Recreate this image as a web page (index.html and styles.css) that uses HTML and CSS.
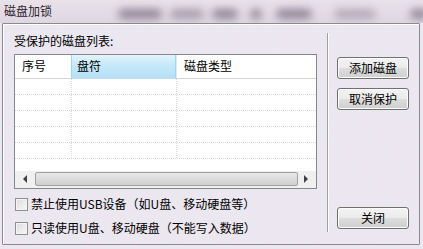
FILE: index.html
```html
<!DOCTYPE html>
<html>
<head>
<meta charset="utf-8">
<link rel="stylesheet" href="styles.css">
</head>
<body>
<div class="window">
  <div class="titlebar">
    <span class="title">磁盘加锁</span>
    <div class="blurs">
      <span class="blob b1"></span><span class="blob b2"></span><span class="blob b3"></span><span class="blob b4"></span><span class="blob b5"></span><span class="blob b6"></span><span class="blob b7"></span>
    </div>
  </div>
  <div class="panel">
    <div class="left">
      <div class="label">受保护的磁盘列表:</div>
      <div class="list">
        <div class="header">
          <div class="col c1">序号</div>
          <div class="col c2 active">盘符</div>
          <div class="col c3">磁盘类型</div>
        </div>
        <div class="rows">
          <div class="row"><span class="cell c1"></span><span class="cell c2"></span><span class="cell c3"></span></div>
          <div class="row"><span class="cell c1"></span><span class="cell c2"></span><span class="cell c3"></span></div>
          <div class="row"><span class="cell c1"></span><span class="cell c2"></span><span class="cell c3"></span></div>
          <div class="row"><span class="cell c1"></span><span class="cell c2"></span><span class="cell c3"></span></div>
          <div class="row"><span class="cell c1"></span><span class="cell c2"></span><span class="cell c3"></span></div>
        </div>
        <div class="hscroll">
          <span class="arrow left-arrow"></span>
          <span class="thumb"></span>
          <span class="arrow right-arrow"></span>
        </div>
      </div>
      <label class="check first"><span class="box"></span>禁止使用USB设备（如U盘、移动硬盘等）</label>
      <label class="check"><span class="box"></span>只读使用U盘、移动硬盘（不能写入数据）</label>
    </div>
    <div class="sep"></div>
    <div class="right">
      <button class="btn">添加磁盘</button>
      <button class="btn second">取消保护</button>
      <button class="btn close">关闭</button>
    </div>
  </div>
</div>
</body>
</html>
```
FILE: styles.css
```css
* { box-sizing: border-box; }
html, body { margin: 0; padding: 0; }
body {
  width: 423px;
  height: 249px;
  overflow: hidden;
  background: #ede9ef;
  font-family: "Noto Sans CJK SC", "Noto Sans", sans-serif;
  font-size: 12px;
  color: #000;
}
.window {
  width: 423px;
  height: 249px;
  background:
    repeating-linear-gradient(45deg, rgba(255,200,240,0.12) 0 1px, rgba(200,230,255,0.12) 1px 2px),
    #ede9ef;
}
.titlebar {
  height: 23px;
  position: relative;
  overflow: hidden;
  background: linear-gradient(#e9e2ea, #ded6e2);
}
.title {
  position: absolute;
  left: 4px;
  top: 3px;
  font-size: 12px;
  line-height: 16px;
  color: #2a2230;
  z-index: 2;
}
.blurs { position: absolute; inset: 0; }
.blob {
  position: absolute;
  top: 9px;
  height: 10px;
  border-radius: 5px;
  background: #6e6276;
  filter: blur(4px);
  opacity: 0.7;
}
.b1 { left: 118px; width: 44px; }
.b2 { left: 170px; width: 34px; opacity: 0.5; }
.b3 { left: 212px; width: 26px; }
.b4 { left: 250px; width: 12px; }
.b5 { left: 276px; width: 36px; }
.b6 { left: 334px; width: 42px; opacity: 0.4; }
.b7 { left: 410px; width: 18px; }

.panel {
  margin: 0 3px 0 2px;
  height: 222px;
  border: 1px solid #8c8892;
  border-radius: 1px;
  display: flex;
  box-shadow: inset 1px 1px 0 #fff;
}
.left {
  width: 324px;
  padding: 10px 0 0 11px;
  display: flex;
  flex-direction: column;
}
.label {
  line-height: 14px;
  height: 14px;
  font-size: 12px;
  margin-bottom: 6px;
}
.list {
  width: 303px;
  height: 135px;
  border: 1px solid #828790;
  background: #fff;
  display: flex;
  flex-direction: column;
}
.header {
  height: 24px;
  display: flex;
  border-bottom: 1px solid #d5d5d5;
  flex: none;
}
.col {
  line-height: 22px;
  padding-left: 7px;
  font-size: 12px;
}
.c1 { width: 56px; }
.c2 { width: 105px; }
.c3 { flex: 1; }
.col.c2, .col.c3 { border-left: 1px solid #e3e8ee; }
.col.active {
  background: linear-gradient(#e3f4fc 0%, #c4e8f8 45%, #b6e0f6 100%);
  border-left: 1px solid #96d9f9;
  border-right: 1px solid #96d9f9;
  padding-left: 5px;
}
.rows { flex: 1; overflow: hidden; }
.row {
  height: 16px;
  display: flex;
  border-bottom: 1px dotted #d8d8d8;
}
.cell { height: 100%; }
.cell.c2, .cell.c3 { border-left: 1px dotted #d8d8d8; }
.hscroll {
  height: 17px;
  flex: none;
  display: flex;
  align-items: center;
  background: #f0f0f0;
  padding: 0 4px 2px 4px;
}
.arrow {
  width: 0; height: 0;
  border-top: 4px solid transparent;
  border-bottom: 4px solid transparent;
}
.left-arrow { border-right: 4px solid #404040; margin: 0 8px 0 4px; }
.right-arrow { border-left: 4px solid #404040; margin: 0 4px 0 6px; }
.thumb {
  flex: 1;
  height: 14px;
  border: 1px solid #a0a0a0;
  border-radius: 2px;
  background: linear-gradient(#e8e8e8, #d0d0d0);
}
.check {
  display: flex;
  align-items: center;
  height: 14px;
  margin-top: 10px;
  font-size: 12px;
  line-height: 14px;
}
.check.first { margin-top: 8px; }
.box {
  width: 13px;
  height: 13px;
  border: 1px solid #8e8f8f;
  background: linear-gradient(135deg, #dcdcdc, #f8f8f8);
  box-shadow: inset 0 0 0 1px #f4f4f4;
  margin: 0 3px 0 1px;
  flex: none;
}
.sep {
  width: 2px;
  height: 199px;
  margin-top: 9px;
  border-left: 1px solid #a0a0a0;
  border-right: 1px solid #fff;
}
.right {
  flex: 1;
  padding: 33px 0 15px 8px;
  display: flex;
  flex-direction: column;
  align-items: flex-start;
}
.btn {
  width: 72px;
  height: 22px;
  padding: 0;
  border: 1px solid #707070;
  border-radius: 3px;
  background: linear-gradient(#f3f3f3 0%, #ebebeb 48%, #dddddd 52%, #cfcfcf 100%);
  box-shadow: inset 0 0 0 1px #fcfcfc;
  font-family: "Noto Sans CJK SC", sans-serif;
  font-size: 12px;
  line-height: 18px;
  color: #000;
}
.btn.second { margin-top: 9px; }
.btn.close { margin-top: auto; }
```
